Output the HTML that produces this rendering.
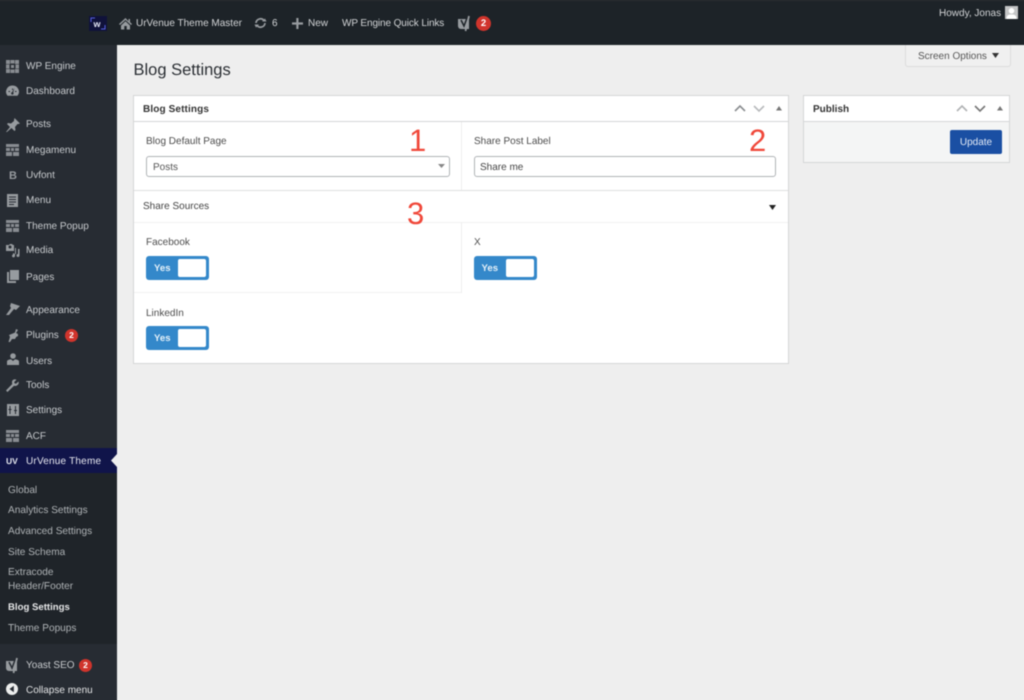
<!DOCTYPE html>
<html><head><meta charset="utf-8"><title>Blog Settings</title>
<style>
html{margin:0;padding:0;width:1024px;height:700px;overflow:hidden;background:#eeeeee}
body{margin:0;padding:0;width:1024px;height:700px;overflow:hidden;background:#eeeeee;position:relative;font-family:"Liberation Sans",sans-serif;font-size:10px;color:#333;text-rendering:geometricPrecision}
#w{position:absolute;left:-8px;top:-8px;width:1040px;height:716px;overflow:hidden;background:#eeeeee;filter:blur(.45px)}
#i{position:absolute;left:8px;top:8px;width:1024px;height:700px}
.a{position:absolute}
.t{position:absolute;white-space:nowrap;line-height:14px;letter-spacing:0;margin-top:1px}
.s{color:#c8cbce}
.sub{color:#aeb2b5;left:8px;font-size:10.1px}
.bar{color:#d2d4d6}
svg{position:absolute;overflow:visible}
.ic{fill:#979b9f}
.cell{fill:#888c91}
.badge{position:absolute;width:13px;height:13px;border-radius:50%;background:#d0342c;color:#fff;font-size:8.5px;font-weight:bold;line-height:13px;text-align:center}
.lab{color:#4c4c4c}
.tog{position:absolute;width:63px;height:24px;background:#3488ca;border-radius:3px}
.tog i{position:absolute;left:32px;top:3px;width:28px;height:18px;background:#fff;border-radius:2px}
.tog b{position:absolute;left:8px;top:6px;font-weight:bold;font-size:9.6px;line-height:14px;color:#e6f1f9}
.num{position:absolute;font-family:"Liberation Sans",sans-serif;color:#f0483a;font-size:31px;line-height:34px}
.ch{fill:none;stroke:#a8abae;stroke-width:1.6}
</style></head><body><div id="w"><div id="i">

<!-- admin bar -->
<div class="a" style="left:-8px;top:-8px;width:1040px;height:53px;background:#1d2328"></div>
<div class="a" style="left:-8px;top:0;width:1040px;height:1px;background:#2a2d30"></div>

<div class="a" style="left:89px;top:16px;width:18px;height:15px;background:#10123a"></div>
<svg style="left:89px;top:16px" width="18" height="15"><path d="M2 6V2h4M16 9v4h-4" fill="none" stroke="#5560e0" stroke-width="1"/></svg>
<div class="t" style="left:93.500px;top:15.500px;font-size:9px;font-weight:bold;color:#e4e6f5">w</div>

<svg style="left:119px;top:17px" width="13" height="13" viewBox="0 0 13 13"><path class="ic" d="M6.500 1 0 7l1 1 5.500-5L12 8l1-1-2-1.900V2H9.500v2.200ZM2 8.500V12.500h3.300V9h2.400v3.500H11V8.500L6.500 4.200Z"/></svg>
<div class="t bar" style="left:136px;top:16px">UrVenue Theme Master</div>

<svg style="left:254px;top:17px" width="13" height="12" viewBox="0 0 13 12"><path d="M2 6a4.500 4.500 0 0 1 8-2.500M11 6a4.500 4.500 0 0 1-8 2.500" fill="none" stroke="#979b9f" stroke-width="1.700"/><path class="ic" d="M8 4.500h4.500L11 1.500ZM5 7.500H.5L2 10.500Z"/></svg>
<div class="t bar" style="left:272px;top:16px">6</div>

<svg style="left:292px;top:18px" width="11" height="11"><path class="ic" d="M4.300 0h2.200v4.400H11v2.200H6.500V11H4.300V6.600H0V4.400h4.300Z"/></svg>
<div class="t bar" style="left:308px;top:16px">New</div>
<div class="t bar" style="left:342px;top:16px;letter-spacing:-.1px">WP Engine Quick Links</div>

<svg style="left:458px;top:16px" width="13" height="15" viewBox="0 0 13 15"><path class="ic" d="M0 3h11v10H3a3 3 0 0 1-3-3Z"/><path d="M3 4l3 6 3-8" fill="none" stroke="#1d2328" stroke-width="1.500"/><path d="M11 0 7.500 15" stroke="#979b9f" stroke-width="1.800"/></svg>
<div class="badge" style="left:476px;top:16px;width:15px;height:15px;line-height:15px;font-size:9.500px">2</div>

<div class="t bar" style="left:939px;top:6px">Howdy, Jonas</div>
<div class="a" style="left:1005px;top:6px;width:13px;height:13px;background:#c4c5c6"></div>
<svg style="left:1005px;top:6px" width="13" height="13"><circle cx="6.500" cy="4.800" r="2.800" fill="#fff"/><path d="M1.500 13c0-4 2-4.500 5-4.500s5 .5 5 4.500Z" fill="#fff"/></svg>

<!-- sidebar -->
<div class="a" style="left:-8px;top:45px;width:125px;height:663px;background:#272c33"></div>
<div class="a" style="left:-8px;top:473px;width:125px;height:171px;background:#1f2429"></div>
<div class="a" style="left:-8px;top:448px;width:125px;height:25px;background:#10144a"></div>
<svg style="left:111px;top:454px" width="6" height="13"><path d="M6 0v13L0 6.500Z" fill="#eeeeee"/></svg>

<!-- sidebar icons -->
<svg style="left:6px;top:60px" width="13" height="13" viewBox="0 0 13 13"><path class="cell" d="M0 0h4v4H0ZM4.500 0h4v3.500h-4ZM9 0h4v4H9ZM0 4.500h3.500v4H0ZM5 5h3v3H5ZM9.500 4.500H13v4H9.500ZM0 9h4v4H0ZM4.500 9.500h4V13h-4ZM9 9h4v4H9Z"/></svg>
<svg style="left:6px;top:85px" width="13" height="12" viewBox="0 0 13 12"><path class="ic" d="M6.500 .5A6.300 6.300 0 0 0 1.500 10.800h10A6.300 6.300 0 0 0 6.500 .5ZM6 3.500h1v1.500H6ZM2.500 6h1.500v1H2.500ZM9 6h1.500v1H9ZM8.500 3 7.200 7.500a1.200 1.200 0 1 1-1.200-.3Z"/></svg>
<svg style="left:6px;top:118px" width="14" height="14" viewBox="0 0 14 14"><path class="ic" d="M8.500 0 14 5.500l-1.500 .5-1 0L9 9l.5 3-1 1L5.500 10 1 14 0 14l4-5L1 6l1-1 3 .5L8 3l0-1Z"/></svg>
<svg style="left:6px;top:144px" width="13" height="12" viewBox="0 0 13 12"><path class="cell" d="M0 0h13v3H0ZM0 4h4v3H0ZM5 4h3v3H5ZM9 4h4v3H9ZM0 8h6v4H0ZM7 8h6v4H7Z"/></svg>
<div class="t" style="left:9px;top:168px;font-weight:bold;color:#979b9f;font-size:11px">B</div>
<svg style="left:7px;top:194px" width="11" height="13" viewBox="0 0 11 13"><path class="ic" fill-rule="evenodd" d="M0 0h11v13H0ZM2 2.500v1h7v-1ZM2 5v1h7V5ZM2 7.500v1h7v-1ZM2 10v1h5v-1Z"/></svg>
<svg style="left:6px;top:220px" width="13" height="12" viewBox="0 0 13 12"><path class="cell" d="M0 0h13v3H0ZM0 4h4v3H0ZM5 4h3v3H5ZM9 4h4v3H9ZM0 8h6v4H0ZM7 8h6v4H7Z"/></svg>
<svg style="left:6px;top:244px" width="14" height="14" viewBox="0 0 14 14"><path class="ic" fill-rule="evenodd" d="M0 1h3l1-1h2l1 1h1v6H0ZM2.500 3a1.500 1.500 0 1 0 3 0 1.500 1.500 0 1 0-3 0ZM9 4h1v6H9ZM12 5h1.500v6.500a1.500 1.500 0 1 1-1.500-1.500ZM7 9l2 1v2a1.500 1.500 0 1 1-2-1.500Z"/></svg>
<svg style="left:7px;top:270px" width="12" height="13" viewBox="0 0 12 13"><path class="ic" d="M3 0h9v10H3ZM0 2h2v9h7v2H0Z"/></svg>
<svg style="left:6px;top:303px" width="14" height="13" viewBox="0 0 14 13"><path class="ic" d="M5 0 14 3 10 7 8 6 3 12H0L5 5 4 3Z"/></svg>
<svg style="left:7px;top:329px" width="12" height="13" viewBox="0 0 12 13"><path class="ic" d="M9 0l2 1-2 3 2 1-3 5H5L3 13H1.500L3 8 2 6l5-2 1-.5ZM11 5.500V7l-2 1 .5-1.500Z"/></svg>
<svg style="left:7px;top:353px" width="12" height="13" viewBox="0 0 12 13"><circle class="ic" cx="6" cy="3" r="2.800"/><path class="ic" d="M0 12V8.500C0 7 2 6.500 4 6.200L6 8l2-1.800c2 .3 4 .8 4 2.300V12Z"/></svg>
<svg style="left:6px;top:379px" width="13" height="13" viewBox="0 0 13 13"><path class="ic" d="M12.500 2.500 10 4.800 8.500 4.300 8.200 3l2.300-2.300C8.500-.2 6.200.7 6 3c0 1 .1 1.500.3 2L0 11.500 1.500 13l6.500-6.200c2.500.8 5.500-1.300 4.500-4.300Z"/></svg>
<svg style="left:7px;top:404px" width="12" height="12" viewBox="0 0 12 12"><path class="ic" fill-rule="evenodd" d="M0 0h12v12H0ZM2.500 2v3H1.500v1h1v4h1V6h1V5h-1V2ZM8 2v4H7v1h1v3h1V7h1V6H9V2Z"/></svg>
<svg style="left:6px;top:430px" width="13" height="12" viewBox="0 0 13 12"><path class="cell" d="M0 0h13v3H0ZM0 4h4v3H0ZM5 4h3v3H5ZM9 4h4v3H9ZM0 8h6v4H0ZM7 8h6v4H7Z"/></svg>
<div class="t" style="left:6px;top:453px;font-size:8.500px;font-weight:bold;color:#e4e6ee">UV</div>
<svg style="left:6px;top:658px" width="13" height="15" viewBox="0 0 13 15"><path class="ic" d="M0 3h11v10H3a3 3 0 0 1-3-3Z"/><path d="M3 4l3 6 3-8" fill="none" stroke="#272c33" stroke-width="1.500"/><path d="M11 0 7.500 15" stroke="#979b9f" stroke-width="1.800"/></svg>
<svg style="left:6px;top:683px" width="12" height="12"><circle cx="6" cy="6" r="6" fill="#eceded"/><path d="M7.800 2.800v6.400L3.500 6Z" fill="#272c33"/></svg>

<!-- sidebar text -->
<div class="t s" style="left:26px;top:59px">WP Engine</div>
<div class="t s" style="left:26px;top:84px">Dashboard</div>
<div class="t s" style="left:26px;top:117px">Posts</div>
<div class="t s" style="left:26px;top:143px">Megamenu</div>
<div class="t s" style="left:26px;top:168px">Uvfont</div>
<div class="t s" style="left:26px;top:193px">Menu</div>
<div class="t s" style="left:26px;top:219px">Theme Popup</div>
<div class="t s" style="left:26px;top:243px">Media</div>
<div class="t s" style="left:26px;top:270px">Pages</div>
<div class="t s" style="left:26px;top:302.500px">Appearance</div>
<div class="t s" style="left:26px;top:328px">Plugins</div>
<div class="badge" style="left:65px;top:329px">2</div>
<div class="t s" style="left:26px;top:353.500px">Users</div>
<div class="t s" style="left:26px;top:378px">Tools</div>
<div class="t s" style="left:26px;top:403px">Settings</div>
<div class="t s" style="left:26px;top:429px">ACF</div>
<div class="t" style="left:26px;top:454px;color:#e8e9f0;letter-spacing:.2px">UrVenue Theme</div>
<div class="t sub" style="top:483px">Global</div>
<div class="t sub" style="top:503px">Analytics Settings</div>
<div class="t sub" style="top:524px">Advanced Settings</div>
<div class="t sub" style="top:545px">Site Schema</div>
<div class="t sub" style="top:565px">Extracode</div>
<div class="t sub" style="top:579px">Header/Footer</div>
<div class="t sub" style="top:600px;color:#e6e7e8;font-weight:bold;font-size:9.6px">Blog Settings</div>
<div class="t sub" style="top:621px">Theme Popups</div>
<div class="t s" style="left:26px;top:658px">Yoast SEO</div>
<div class="badge" style="left:79px;top:659px">2</div>
<div class="t" style="left:26px;top:682.500px;color:#e4e5e6">Collapse menu</div>

<!-- screen options -->
<div class="a" style="left:905px;top:45px;width:104px;height:21px;background:#f0f0f0;border:1px solid #dcdcdc;border-top:0;border-radius:0 0 3px 3px"></div>
<div class="t" style="left:918px;top:49px;color:#555">Screen Options</div>
<svg style="left:992px;top:53px" width="7" height="5"><path d="M0 0h7L3.500 5Z" fill="#333"/></svg>

<div class="t" style="left:133.500px;top:59px;font-size:16.500px;line-height:20px;color:#2a2e33">Blog Settings</div>

<!-- main box -->
<div class="a" style="left:133px;top:95px;width:654px;height:267px;background:#fff;border:1px solid #d5d6d7"></div>
<div class="a" style="left:134px;top:121px;width:654px;height:1px;background:#d5d6d7"></div>
<div class="a" style="left:134px;top:190px;width:654px;height:1px;background:#dfe0e1"></div>
<div class="a" style="left:134px;top:222px;width:654px;height:1px;background:#f1f1f1"></div>
<div class="a" style="left:461px;top:122px;width:1px;height:68px;background:#eeeeee"></div>
<div class="a" style="left:461px;top:223px;width:1px;height:70px;background:#eeeeee"></div>
<div class="a" style="left:134px;top:292px;width:327px;height:1px;background:#f1f1f1"></div>

<div class="t" style="left:143px;top:101.500px;font-weight:bold;color:#333;letter-spacing:.12px">Blog Settings</div>
<svg style="left:734px;top:104px" width="50" height="9"><path class="ch" style="stroke:#8a8d90" d="M1 7l5-5 5 5"/><path class="ch" style="stroke:#b8babc" d="M20 2l5 5 5-5"/><path d="M42 6.500h6l-3-4.500Z" fill="#777"/></svg>

<div class="t lab" style="left:146px;top:134px">Blog Default Page</div>
<div class="a" style="left:146px;top:156px;width:302px;height:19px;background:#fff;border:1px solid #b0b3b6;border-radius:3px"></div>
<div class="t" style="left:153px;top:160px;color:#555">Posts</div>
<svg style="left:438px;top:164px" width="7" height="4"><path d="M0 0h7L3.500 4Z" fill="#888"/></svg>

<div class="t lab" style="left:474px;top:134px">Share Post Label</div>
<div class="a" style="left:474px;top:156px;width:300px;height:19px;background:#fff;border:1px solid #b0b3b6;border-radius:3px"></div>
<div class="t" style="left:480px;top:160px;color:#444">Share me</div>

<div class="t" style="left:143px;top:199px;color:#444">Share Sources</div>
<svg style="left:769px;top:205px" width="7" height="5"><path d="M0 0h7L3.500 5Z" fill="#222"/></svg>

<div class="t lab" style="left:146px;top:235px">Facebook</div>
<div class="tog" style="left:146px;top:256px"><b>Yes</b><i></i></div>
<div class="t lab" style="left:474px;top:235px">X</div>
<div class="tog" style="left:473.500px;top:256px"><b>Yes</b><i></i></div>
<div class="t lab" style="left:146px;top:306px">LinkedIn</div>
<div class="tog" style="left:146px;top:326px"><b>Yes</b><i></i></div>

<div class="num" style="left:409px;top:124px">1</div>
<div class="num" style="left:749px;top:124px">2</div>
<div class="num" style="left:407px;top:197px">3</div>

<!-- publish box -->
<div class="a" style="left:803px;top:95px;width:205px;height:66px;background:#f4f5f5;border:1px solid #d5d6d7"></div>
<div class="a" style="left:804px;top:96px;width:205px;height:25px;background:#fff;border-bottom:1px solid #d5d6d7"></div>
<div class="t" style="left:813px;top:101.500px;font-weight:bold;color:#333">Publish</div>
<svg style="left:956px;top:104px" width="50" height="9"><path class="ch" style="stroke:#b0b2b4" d="M1 7l5-5 5 5"/><path class="ch" style="stroke:#777" d="M19 2l5 5 5-5"/><path d="M41 6.500h6l-3-4.500Z" fill="#777"/></svg>
<div class="a" style="left:950px;top:130px;width:52px;height:24px;background:#1a4fa3;border-radius:2px"></div>
<div class="t" style="left:950px;top:135px;width:52px;text-align:center;color:#e4ebf6">Update</div>

</div></div></body></html>
